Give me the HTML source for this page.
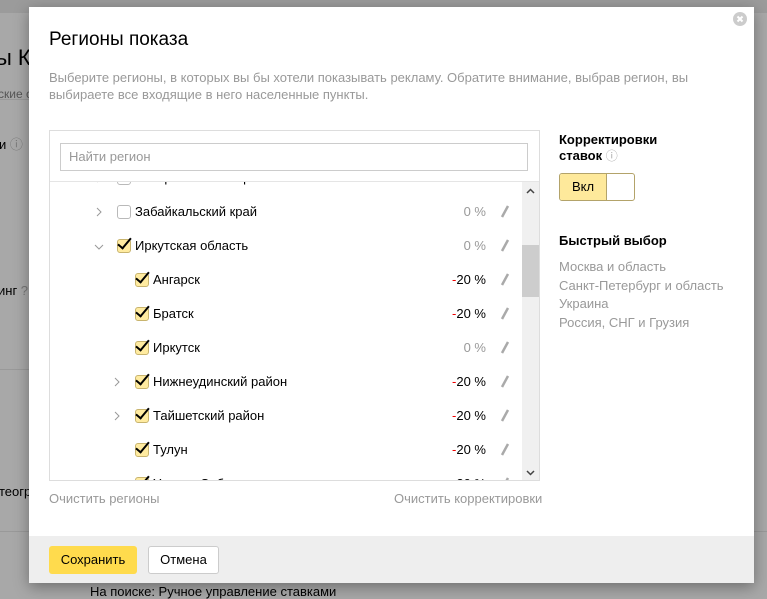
<!DOCTYPE html>
<html><head><meta charset="utf-8"><style>
*{margin:0;padding:0;box-sizing:border-box}
body{width:767px;height:598px;overflow:hidden;background:#a8a8a8;font-family:"Liberation Sans",Arial,sans-serif;position:relative;font-size:13px;color:#000}
.a{position:absolute;white-space:nowrap}
.modal{position:absolute;left:29px;top:7px;width:725px;height:576px;background:#fff;box-shadow:0 4px 14px rgba(0,0,0,.35)}
.foot{position:absolute;left:0;right:0;bottom:0;height:47px;background:#eee}
.row{position:absolute;left:0;width:470px;height:34px;line-height:34px}
.cb{position:absolute;width:14px;height:14px;border:1px solid #b9b9b9;border-radius:3px;background:#fff;top:10px}
.cb.on{background:#ffeba0;border-color:#c8b46e}
.cb.on::after{content:"";position:absolute;left:3px;top:-5px;width:5px;height:12px;border-right:2px solid #000;border-bottom:2px solid #000;transform:rotate(40deg)}
.arr{position:absolute;top:12px}
.pct{position:absolute;right:34px;top:0}
.pen{position:absolute;left:450px;top:10px}
.g{color:#999}
</style></head><body>
<div style="position:absolute;left:0;top:0;width:767px;height:13px;background:#9b9b9b"></div>
<div class="a" style="left:-4px;top:45px;font-size:22px">ы К</div>
<div class="a" style="left:-2px;top:87px;font-size:12px;color:#555">ские с</div>
<div class="a" style="left:-1px;top:134px">и <span style="color:#777">ⓘ</span></div>
<div style="position:absolute;left:0;top:99px;width:30px;height:1px;background:#999"></div>
<div class="a" style="left:-2px;top:283px">инг <span style="color:#777">?</span></div>
<div style="position:absolute;left:0;top:369px;width:30px;height:1px;background:#999"></div>
<div class="a" style="left:-1px;top:484px">теогр</div>
<div style="position:absolute;left:0;top:531px;width:767px;height:1px;background:#999"></div>
<div class="a" style="left:90px;top:584px">На поиске: Ручное управление ставками</div>

<div class="modal">
<svg class="a" style="left:704px;top:5px" width="14" height="14"><circle cx="7" cy="7" r="7" fill="#ccc"/><path d="M4.5 4.5l5 5M9.5 4.5l-5 5" stroke="#fff" stroke-width="2"/></svg>
<div class="a" style="left:20px;top:22px;font-size:19px">Регионы показа</div>
<div class="a g" style="left:20px;top:62px;line-height:17px;font-size:13px;white-space:normal;width:680px">Выберите регионы, в которых вы бы хотели показывать рекламу. Обратите внимание, выбрав регион, вы выбираете все входящие в него населенные пункты.</div>

<div style="position:absolute;left:20px;top:123px;width:491px;height:351px;border:1px solid #ddd;overflow:hidden">
<div style="position:absolute;left:10px;top:12px;width:468px;height:28px;border:1px solid #ccc;padding-left:8px;line-height:26px;color:#999">Найти регион</div>
<div style="position:absolute;left:0;top:50px;width:491px;height:1px;background:#e5e5e5"></div>
<div style="position:absolute;left:0;top:51px;width:490px;height:300px;overflow:hidden">
<div style="position:absolute;left:472px;top:0;width:17px;height:300px;background:#f0f0f0"></div>
<div style="position:absolute;left:472px;top:63px;width:17px;height:52px;background:#cdcdcd"></div>
<svg class="a" style="left:476px;top:6px" width="9" height="6"><path d="M1 5l3.5-3.5L8 5" fill="none" stroke="#444" stroke-width="1.5"/></svg>
<svg class="a" style="left:476px;top:288px" width="9" height="6"><path d="M1 1l3.5 3.5L8 1" fill="none" stroke="#444" stroke-width="1.5"/></svg>
<div style="position:relative;top:-9px">
<div class="row" style="top:-12px"><svg class="arr" style="left:45px" width="8" height="10"><path d="M2 1l4 4-4 4" fill="none" stroke="#999"/></svg><span class="cb" style="left:67px"></span><span class="a" style="left:85px">Ставропольский край</span><span class="pct g">0 %</span></div>
<div class="row" style="top:22px"><svg class="arr" style="left:45px" width="8" height="10"><path d="M2 1l4 4-4 4" fill="none" stroke="#999"/></svg><span class="cb" style="left:67px"></span><span class="a" style="left:85px">Забайкальский край</span><span class="pct g">0 %</span><svg class="pen" width="10" height="14"><path d="M8 1L2 12" stroke="#aaa" stroke-width="2.5"/></svg></div>
<div class="row" style="top:56px"><svg class="arr" style="left:44px;top:14px" width="10" height="8"><path d="M1 2l4 4 4-4" fill="none" stroke="#999"/></svg><span class="cb on" style="left:67px"></span><span class="a" style="left:85px">Иркутская область</span><span class="pct g">0 %</span><svg class="pen" width="10" height="14"><path d="M8 1L2 12" stroke="#aaa" stroke-width="2.5"/></svg></div>
<div class="row" style="top:90px"><span class="cb on" style="left:85px"></span><span class="a" style="left:103px">Ангарск</span><span class="pct"><span style="color:#e00">-</span>20 %</span><svg class="pen" width="10" height="14"><path d="M8 1L2 12" stroke="#aaa" stroke-width="2.5"/></svg></div>
<div class="row" style="top:124px"><span class="cb on" style="left:85px"></span><span class="a" style="left:103px">Братск</span><span class="pct"><span style="color:#e00">-</span>20 %</span><svg class="pen" width="10" height="14"><path d="M8 1L2 12" stroke="#aaa" stroke-width="2.5"/></svg></div>
<div class="row" style="top:158px"><span class="cb on" style="left:85px"></span><span class="a" style="left:103px">Иркутск</span><span class="pct g">0 %</span><svg class="pen" width="10" height="14"><path d="M8 1L2 12" stroke="#aaa" stroke-width="2.5"/></svg></div>
<div class="row" style="top:192px"><svg class="arr" style="left:63px" width="8" height="10"><path d="M2 1l4 4-4 4" fill="none" stroke="#999"/></svg><span class="cb on" style="left:85px"></span><span class="a" style="left:103px">Нижнеудинский район</span><span class="pct"><span style="color:#e00">-</span>20 %</span><svg class="pen" width="10" height="14"><path d="M8 1L2 12" stroke="#aaa" stroke-width="2.5"/></svg></div>
<div class="row" style="top:226px"><svg class="arr" style="left:63px" width="8" height="10"><path d="M2 1l4 4-4 4" fill="none" stroke="#999"/></svg><span class="cb on" style="left:85px"></span><span class="a" style="left:103px">Тайшетский район</span><span class="pct"><span style="color:#e00">-</span>20 %</span><svg class="pen" width="10" height="14"><path d="M8 1L2 12" stroke="#aaa" stroke-width="2.5"/></svg></div>
<div class="row" style="top:260px"><span class="cb on" style="left:85px"></span><span class="a" style="left:103px">Тулун</span><span class="pct"><span style="color:#e00">-</span>20 %</span><svg class="pen" width="10" height="14"><path d="M8 1L2 12" stroke="#aaa" stroke-width="2.5"/></svg></div>
<div class="row" style="top:294px"><span class="cb on" style="left:85px"></span><span class="a" style="left:103px">Усолье-Сибирское</span><span class="pct"><span style="color:#e00">-</span>20 %</span><svg class="pen" width="10" height="14"><path d="M8 1L2 12" stroke="#aaa" stroke-width="2.5"/></svg></div>
</div></div></div>

<div class="a g" style="left:20px;top:484px">Очистить регионы</div>
<div class="a g" style="left:365px;top:484px">Очистить корректировки</div>

<div class="a" style="left:530px;top:125px;font-weight:bold;line-height:16px">Корректировки<br>ставок <span style="font-weight:normal;color:#aaa;font-size:12px">ⓘ</span></div>
<div style="position:absolute;left:530px;top:166px;width:76px;height:28px;border:1px solid #b3a36a;border-radius:3px;background:#fff;overflow:hidden">
<div style="position:absolute;left:0;top:0;width:47px;height:26px;background:#fee99b;border-right:1px solid #b3a36a;text-align:center;line-height:26px">Вкл</div></div>
<div class="a" style="left:530px;top:226px;font-weight:bold">Быстрый выбор</div>
<div class="a g" style="left:530px;top:251px;line-height:18.7px">Москва и область<br>Санкт-Петербург и область<br>Украина<br>Россия, СНГ и Грузия</div>

<div class="foot">
<div style="position:absolute;left:20px;top:10px;width:88px;height:28px;background:#ffdb4d;border-radius:3px;text-align:center;line-height:28px">Сохранить</div>
<div style="position:absolute;left:119px;top:10px;width:71px;height:28px;background:#fff;border:1px solid #ccc;border-radius:3px;text-align:center;line-height:26px">Отмена</div>
</div>
</div>
</body></html>
